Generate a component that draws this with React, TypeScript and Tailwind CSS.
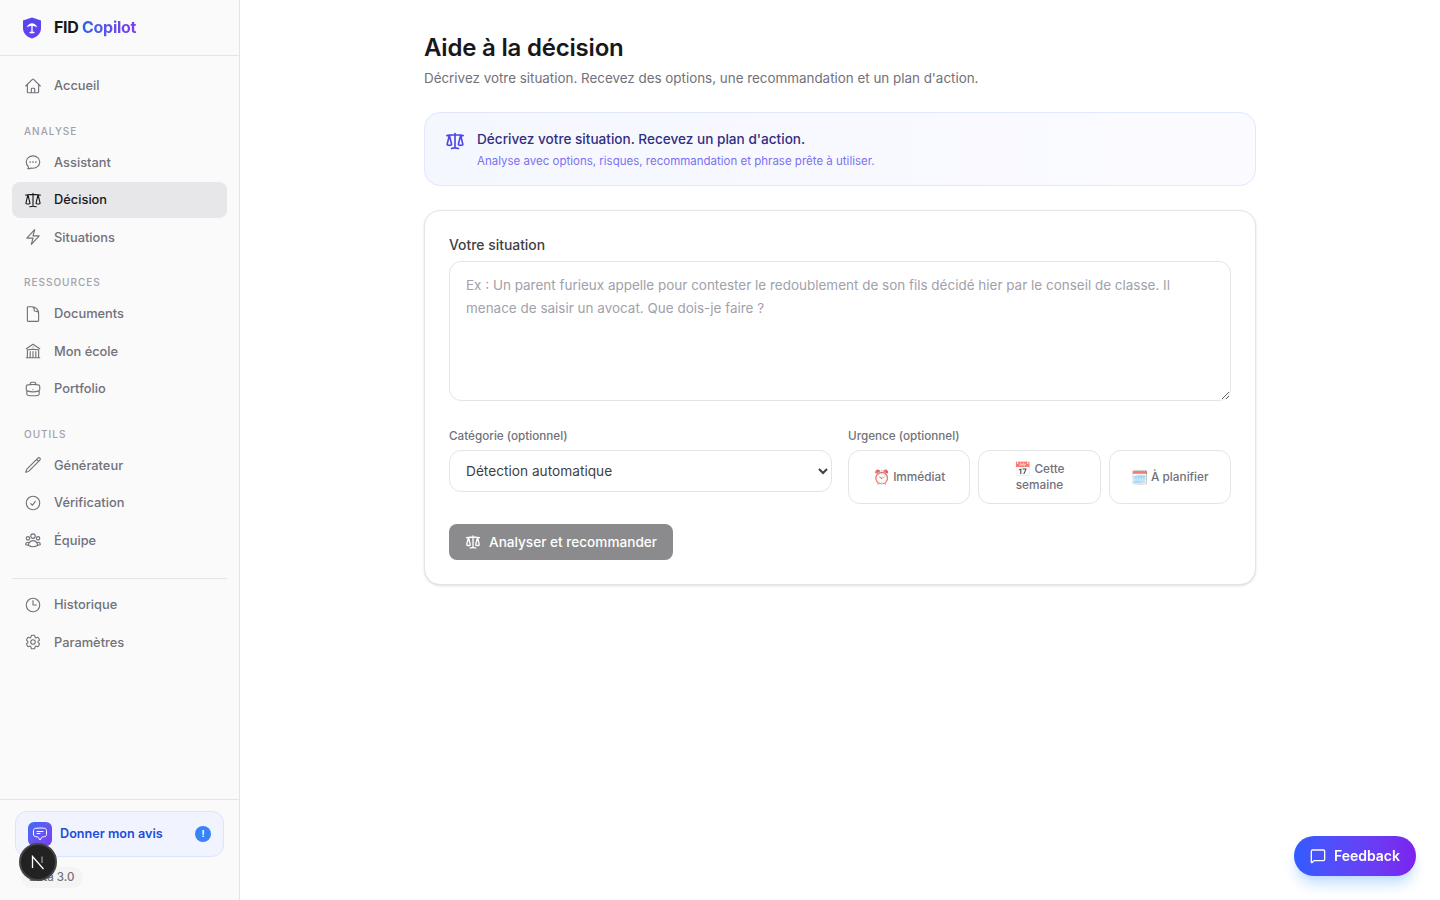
import type { ComponentType } from "react";
import {
  HiOutlineHome,
  HiOutlineChatBubbleOvalLeftEllipsis,
  HiOutlineScale,
  HiOutlineBolt,
  HiOutlineDocument,
  HiOutlineBuildingLibrary,
  HiOutlineBriefcase,
  HiOutlinePencil,
  HiOutlineCheckCircle,
  HiOutlineUserGroup,
  HiOutlineClock,
  HiOutlineCog6Tooth,
  HiOutlineChatBubbleBottomCenterText,
} from "react-icons/hi2";
import { MessageSquare } from "lucide-react";

type Item = { label: string; icon: ComponentType<{ className?: string }>; active?: boolean };

const groups: { title: string; items: Item[] }[] = [
  {
    title: "ANALYSE",
    items: [
      { label: "Assistant", icon: HiOutlineChatBubbleOvalLeftEllipsis },
      { label: "Décision", icon: HiOutlineScale, active: true },
      { label: "Situations", icon: HiOutlineBolt },
    ],
  },
  {
    title: "RESSOURCES",
    items: [
      { label: "Documents", icon: HiOutlineDocument },
      { label: "Mon école", icon: HiOutlineBuildingLibrary },
      { label: "Portfolio", icon: HiOutlineBriefcase },
    ],
  },
  {
    title: "OUTILS",
    items: [
      { label: "Générateur", icon: HiOutlinePencil },
      { label: "Vérification", icon: HiOutlineCheckCircle },
      { label: "Équipe", icon: HiOutlineUserGroup },
    ],
  },
];

const urgencies = [
  { emoji: "⏰", label: "Immédiat" },
  { emoji: "📅", label: "Cette semaine" },
  { emoji: "🗓️", label: "À planifier" },
];

function NavItem({ label, icon: Icon, active }: Item) {
  return (
    <a
      className={
        active
          ? "flex items-center gap-3 rounded-lg bg-[#e7e7ea] px-3 py-2 text-[12.85px] leading-[19.5px] font-medium text-[#18181b]"
          : "flex items-center gap-3 rounded-lg px-3 py-2 text-[12.85px] leading-[19.5px] font-medium text-[#71717a]"
      }
    >
      <Icon className="h-[18px] w-[18px] shrink-0" />
      {label}
    </a>
  );
}

function Logo() {
  return (
    <svg viewBox="0 0 24 24" className="h-6 w-6">
      <defs>
        <linearGradient id="logo" x1="0" y1="0" x2="0" y2="1">
          <stop offset="0" stopColor="#5148f0" />
          <stop offset="1" stopColor="#6a3ff0" />
        </linearGradient>
      </defs>
      <path d="M12 1.500 21 4.500V12c0 5.500-3.800 8.800-9 10.500C6.800 20.800 3 17.500 3 12V4.500Z" fill="url(#logo)" />
      <path d="M6.500 11.500C8 8.300 10 7.300 12 7.300S16 8.300 17.500 11.500C15.500 10.200 13.800 9.900 12 9.900S8.500 10.200 6.500 11.500Z" fill="#fff" />
      <path d="M12 9.500V17M10 16.500h4" fill="none" stroke="#fff" strokeWidth="1.300" strokeLinecap="round" />
    </svg>
  );
}

function NextMark() {
  return (
    <svg viewBox="0 0 16 16" className="h-4 w-4" fill="none" stroke="#fff" strokeWidth="1.300">
      <path d="M2.500 14V2.500L13.500 15" />
      <path d="M12 2.500V9" stroke="#9a9a9a" />
    </svg>
  );
}

export default function App() {
  return (
    <div className="flex h-screen bg-white font-['Inter',sans-serif] text-[#18181b]">
      {/* Sidebar */}
      <aside className="flex w-[240px] shrink-0 flex-col border-r border-[#e4e4e7] bg-[#fafafa]">
        <div className="flex h-[56px] shrink-0 items-center gap-2.5 border-b border-[#e4e4e7] px-5">
          <Logo />
          <span className="-mt-px text-[16px] font-bold tracking-[-0.3px]">
            FID{" "}
            <span className="bg-gradient-to-r from-[#2563eb] to-[#7c3aed] bg-clip-text text-transparent">Copilot</span>
          </span>
        </div>

        <nav className="flex-1 p-3">
          <NavItem label="Accueil" icon={HiOutlineHome} />
          {groups.map((g) => (
            <div key={g.title} className="mt-5">
              <p className="px-3 pb-1.5 text-[10px] leading-[15px] font-medium tracking-[1px] text-[#a1a1aa]">{g.title}</p>
              <div className="flex flex-col gap-0.5">
                {g.items.map((it) => (
                  <NavItem key={it.label} {...it} />
                ))}
              </div>
            </div>
          ))}
          <div className="mt-5 border-t border-[#e4e4e7] pt-2">
            <div className="flex flex-col gap-0.5">
              <NavItem label="Historique" icon={HiOutlineClock} />
              <NavItem label="Paramètres" icon={HiOutlineCog6Tooth} />
            </div>
          </div>
        </nav>

        <div className="h-[101px] shrink-0 border-t border-[#e4e4e7] px-[15px] pt-[11px]">
          <div className="flex h-[46px] items-center gap-2 rounded-xl border border-[#dbe4ff] bg-[#f1f4ff] px-3">
            <span className="flex h-6 w-6 items-center justify-center rounded-md bg-gradient-to-br from-[#3b6cf6] to-[#7c3aed] text-white">
              <HiOutlineChatBubbleBottomCenterText className="h-4 w-4" />
            </span>
            <span className="flex-1 text-[12.65px] font-semibold text-[#1d4ed8]">Donner mon avis</span>
            <span className="flex h-4 w-4 items-center justify-center rounded-full bg-[#3b82f6] text-[9px] font-bold text-white">!</span>
          </div>
          <div className="mt-[10px] ml-[6px] inline-flex h-[21px] items-center rounded-full bg-[#f4f4f5] pr-[9px] pl-2 text-[11.5px] font-medium text-[#71717a]">
            Beta 3.0
          </div>
        </div>
      </aside>

      {/* Main */}
      <main className="flex-1 overflow-auto">
        <div className="mx-auto w-[832px] pt-8">
          <h1 className="text-[24px] leading-8 font-semibold tracking-[-0.2px] text-[#18181b]">Aide à la décision</h1>
          <p className="mt-1 text-[13.4px] leading-5 text-[#71717a]">
            Décrivez votre situation. Recevez des options, une recommandation et un plan d'action.
          </p>

          <div className="mt-6 flex h-[74px] items-start gap-3 rounded-2xl border border-[#e0e7ff] bg-gradient-to-r from-[#f5f7ff] to-[#fbfbff] px-5 pt-4">
            <HiOutlineScale strokeWidth={2} className="mt-0.5 h-5 w-5 shrink-0 text-[#4f46e5]" />
            <div>
              <p className="text-[13.6px] leading-5 font-medium text-[#312e81]">Décrivez votre situation. Recevez un plan d'action.</p>
              <p className="mt-[3px] text-[11.5px] leading-[18px] text-[#7a70f2]">
                Analyse avec options, risques, recommandation et phrase prête à utiliser.
              </p>
            </div>
          </div>

          <div className="mt-6 rounded-2xl border border-[#e4e4e7] bg-white p-6 shadow-sm">
            <label className="block text-[13.9px] leading-5 font-medium text-[#3f3f46]">Votre situation</label>
            <textarea
              className="mt-1.5 block h-[140px] w-full rounded-xl border border-[#e4e4e7] bg-white px-4 py-3 text-[13.47px] leading-[22.75px] outline-none placeholder:text-[#a1a1aa]"
              placeholder="Ex : Un parent furieux appelle pour contester le redoublement de son fils décidé hier par le conseil de classe. Il menace de saisir un avocat. Que dois-je faire ?"
            />

            <div className="mt-[26px] grid grid-cols-2 gap-4">
              <div>
                <label className="mb-[5px] block text-[11.7px] leading-[18px] font-medium text-[#71717a]">Catégorie (optionnel)</label>
                <select className="block h-[42px] w-full rounded-xl border border-[#e4e4e7] bg-white pr-3.5 pl-3 text-[13.7px] text-[#3f3f46] outline-none">
                  <option>Détection automatique</option>
                </select>
              </div>
              <div>
                <label className="mb-[5px] block text-[11.7px] leading-[18px] font-medium text-[#71717a]">Urgence (optionnel)</label>
                <div className="grid grid-cols-3 gap-2">
                  {urgencies.map((u) => (
                    <button key={u.label} className="h-[54px] rounded-xl border border-[#e4e4e7] bg-white px-3 text-[11.8px] leading-4 font-medium text-[#71717a]">
                      <span className="mr-[3px] inline-block align-[-1px] text-[14px] leading-none opacity-70">{u.emoji}</span>
                      {u.label}
                    </button>
                  ))}
                </div>
              </div>
            </div>

            <button className="mt-5 flex h-9 items-center gap-2 rounded-lg bg-[#8b8b8d] px-4 text-[13.6px] font-medium text-white">
              <HiOutlineScale strokeWidth={2} className="h-4 w-4" />
              Analyser et recommander
            </button>
          </div>
        </div>
      </main>

      {/* Floating */}
      <button className="fixed right-6 bottom-6 flex h-10 items-center gap-2 rounded-full bg-gradient-to-r from-[#2f5bff] to-[#7c22ee] px-4 text-[14px] font-semibold text-white shadow-lg shadow-blue-200">
        <MessageSquare className="h-4 w-4" />
        <span className="-mt-px">Feedback</span>
      </button>

      <div className="fixed bottom-[19px] left-[19px] flex h-[38px] w-[38px] items-center justify-center rounded-full border-2 border-[#454545] bg-[#222222]">
        <NextMark />
      </div>
    </div>
  );
}
